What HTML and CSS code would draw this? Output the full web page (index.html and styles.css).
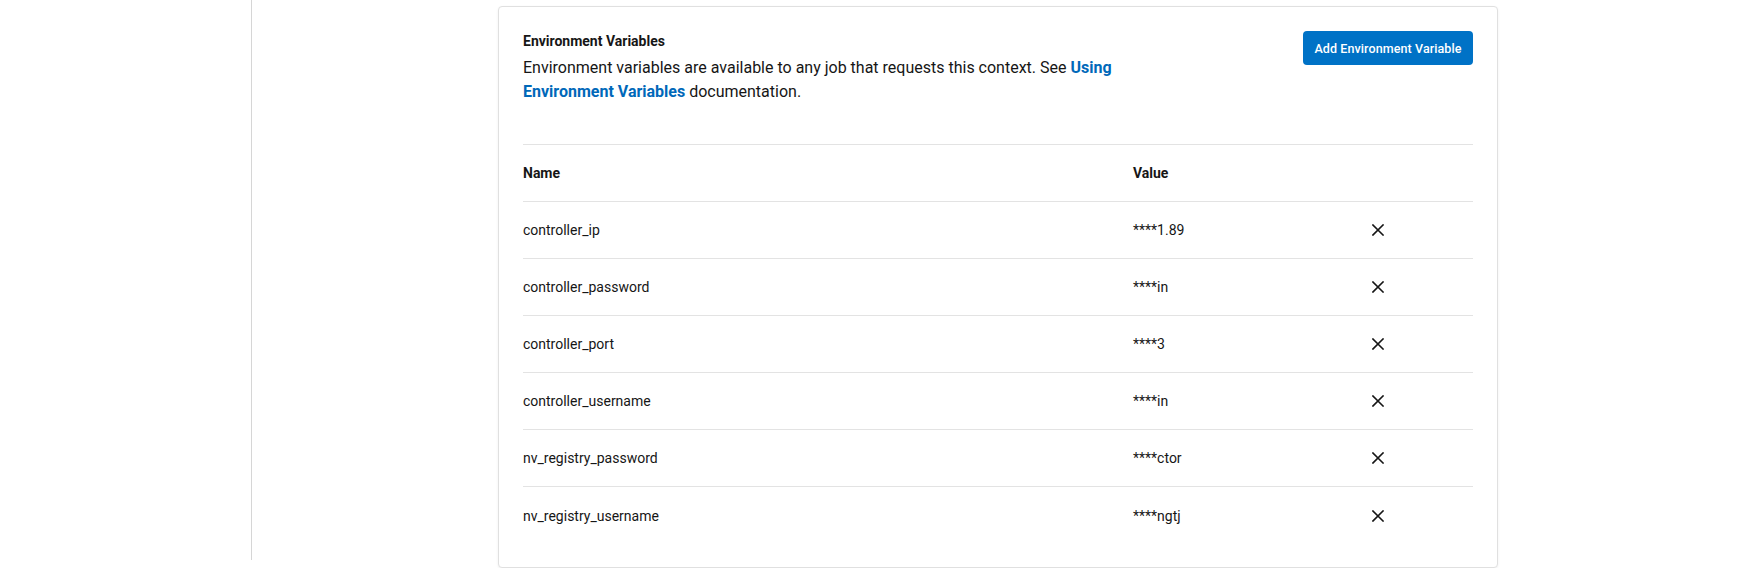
FILE: index.html
```html
<!DOCTYPE html>
<html lang="en">
<head>
<meta charset="utf-8">
<title>Environment Variables</title>
<link rel="stylesheet" href="styles.css">
</head>
<body>
<div class="layout">
  <aside class="sidebar"></aside>
  <main class="main">
    <section class="card">
      <div class="card-head">
        <div class="intro">
          <h2 class="title">Environment Variables</h2>
          <p class="desc">Environment variables are available to any job that requests this context. See <a class="link" href="#">Using Environment Variables</a> documentation.</p>
        </div>
        <button class="btn" type="button">Add Environment Variable</button>
      </div>
      <div class="table">
        <div class="row head"><span>Name</span><span>Value</span><span></span></div>
        <div class="row"><span>controller_ip</span><span>****1.89</span><span class="del"><svg viewBox="0 0 12 12" width="12" height="12"><path d="M1 1L11 11M11 1L1 11"/></svg></span></div>
        <div class="row"><span>controller_password</span><span>****in</span><span class="del"><svg viewBox="0 0 12 12" width="12" height="12"><path d="M1 1L11 11M11 1L1 11"/></svg></span></div>
        <div class="row"><span>controller_port</span><span>****3</span><span class="del"><svg viewBox="0 0 12 12" width="12" height="12"><path d="M1 1L11 11M11 1L1 11"/></svg></span></div>
        <div class="row"><span>controller_username</span><span>****in</span><span class="del"><svg viewBox="0 0 12 12" width="12" height="12"><path d="M1 1L11 11M11 1L1 11"/></svg></span></div>
        <div class="row"><span>nv_registry_password</span><span>****ctor</span><span class="del"><svg viewBox="0 0 12 12" width="12" height="12"><path d="M1 1L11 11M11 1L1 11"/></svg></span></div>
        <div class="row last"><span>nv_registry_username</span><span>****ngtj</span><span class="del"><svg viewBox="0 0 12 12" width="12" height="12"><path d="M1 1L11 11M11 1L1 11"/></svg></span></div>
      </div>
    </section>
  </main>
</div>
</body>
</html>
```
FILE: styles.css
```css
* { box-sizing: border-box; }
html, body { margin: 0; padding: 0; background: #fff; }
body {
  font-family: Roboto, "Liberation Sans", Arial, sans-serif;
  color: #161616;
  overflow: hidden;
}
.layout { display: flex; align-items: flex-start; }
.sidebar {
  width: 252px;
  height: 560px;
  border-right: 1px solid #d6d6d6;
  flex: none;
}
.main { padding: 6px 0 0 246px; }
.card {
  width: 1000px;
  border: 1px solid #e0e0e0;
  border-radius: 4px;
  box-shadow: 0 1px 3px rgba(0,0,0,0.06);
  padding: 24px 24px 23px;
  background: #fff;
}
.card-head {
  display: flex;
  justify-content: space-between;
  align-items: flex-start;
}
.intro { width: 600px; }
.title {
  margin: 0;
  font-size: 14px;
  line-height: 20px;
  font-weight: 700;
  color: #161616;
}
.desc {
  margin: 5px 0 0;
  font-size: 16px;
  line-height: 24px;
  color: #161616;
}
.link { color: #0068b9; font-weight: 700; text-decoration: none; }
.btn {
  flex: none;
  width: 170px;
  height: 34px;
  border: none;
  border-radius: 4px;
  background: #0072c6;
  color: #fff;
  font-family: inherit;
  font-size: 12.5px;
  font-weight: 500;
  letter-spacing: 0.1px;
  padding: 0;
  margin: 0;
}
.table { margin-top: 40px; border-top: 1px solid #e3e3e3; }
.row {
  display: grid;
  grid-template-columns: 610px 239px 1fr;
  align-items: center;
  height: 57px;
  border-bottom: 1px solid #e3e3e3;
  font-size: 14px;
  color: #161616;
}
.row.head { font-weight: 700; }
.row.last { border-bottom: none; }
.del { display: flex; align-items: center; }
.del svg { fill: none; stroke: #161616; stroke-width: 1.6; stroke-linecap: square; }
```
